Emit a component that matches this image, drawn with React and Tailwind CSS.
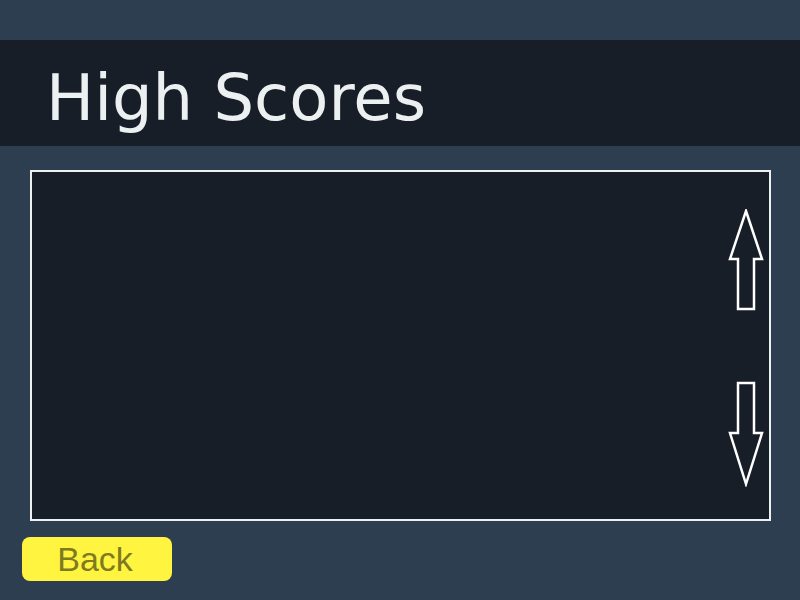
import React from "react";

function UpArrow() {
  return (
    <svg width="36" height="104" viewBox="0 0 36 104" className="block">
      <path
        d="M18 2 L34 50 L26 50 L26 100 L10 100 L10 50 L2 50 Z"
        fill="none"
        stroke="#ffffff"
        strokeWidth="2.5"
        strokeLinejoin="miter"
      />
    </svg>
  );
}

function DownArrow() {
  return (
    <svg width="36" height="106" viewBox="0 0 36 106" className="block">
      <path
        d="M10 2 L26 2 L26 52 L34 52 L18 103 L2 52 L10 52 Z"
        fill="none"
        stroke="#ffffff"
        strokeWidth="2.5"
        strokeLinejoin="miter"
      />
    </svg>
  );
}

export default function App() {
  return (
    <div className="w-[800px] h-[600px] bg-[#2c3e50] flex flex-col overflow-hidden">
      <div className="h-[40px]" />
      <div className="h-[106px] bg-[#171e28] flex items-start pl-[46px] pt-[26px]">
        <h1
          className="text-[64px] leading-none text-[#ecf0f1]"
          style={{ fontFamily: '"DejaVu Sans", sans-serif' }}
        >
          High Scores
        </h1>
      </div>
      <div className="mt-[24px] ml-[30px] w-[741px] h-[351px] border-2 border-[#ecf0f1] bg-[#171e28] flex justify-end pr-[5px]">
        <div className="flex flex-col justify-between pt-[37px] pb-[32px]">
          <UpArrow />
          <DownArrow />
        </div>
      </div>
      <div className="mt-[16px] ml-[22px]">
        <button
          className="w-[150px] h-[44px] rounded-[8px] bg-[#fff43f] text-[#7f7a1f] text-[34px] leading-none flex items-center justify-center pr-[4px]"
          style={{ fontFamily: '"Liberation Sans", Arial, sans-serif' }}
        >
          Back
        </button>
      </div>
    </div>
  );
}
